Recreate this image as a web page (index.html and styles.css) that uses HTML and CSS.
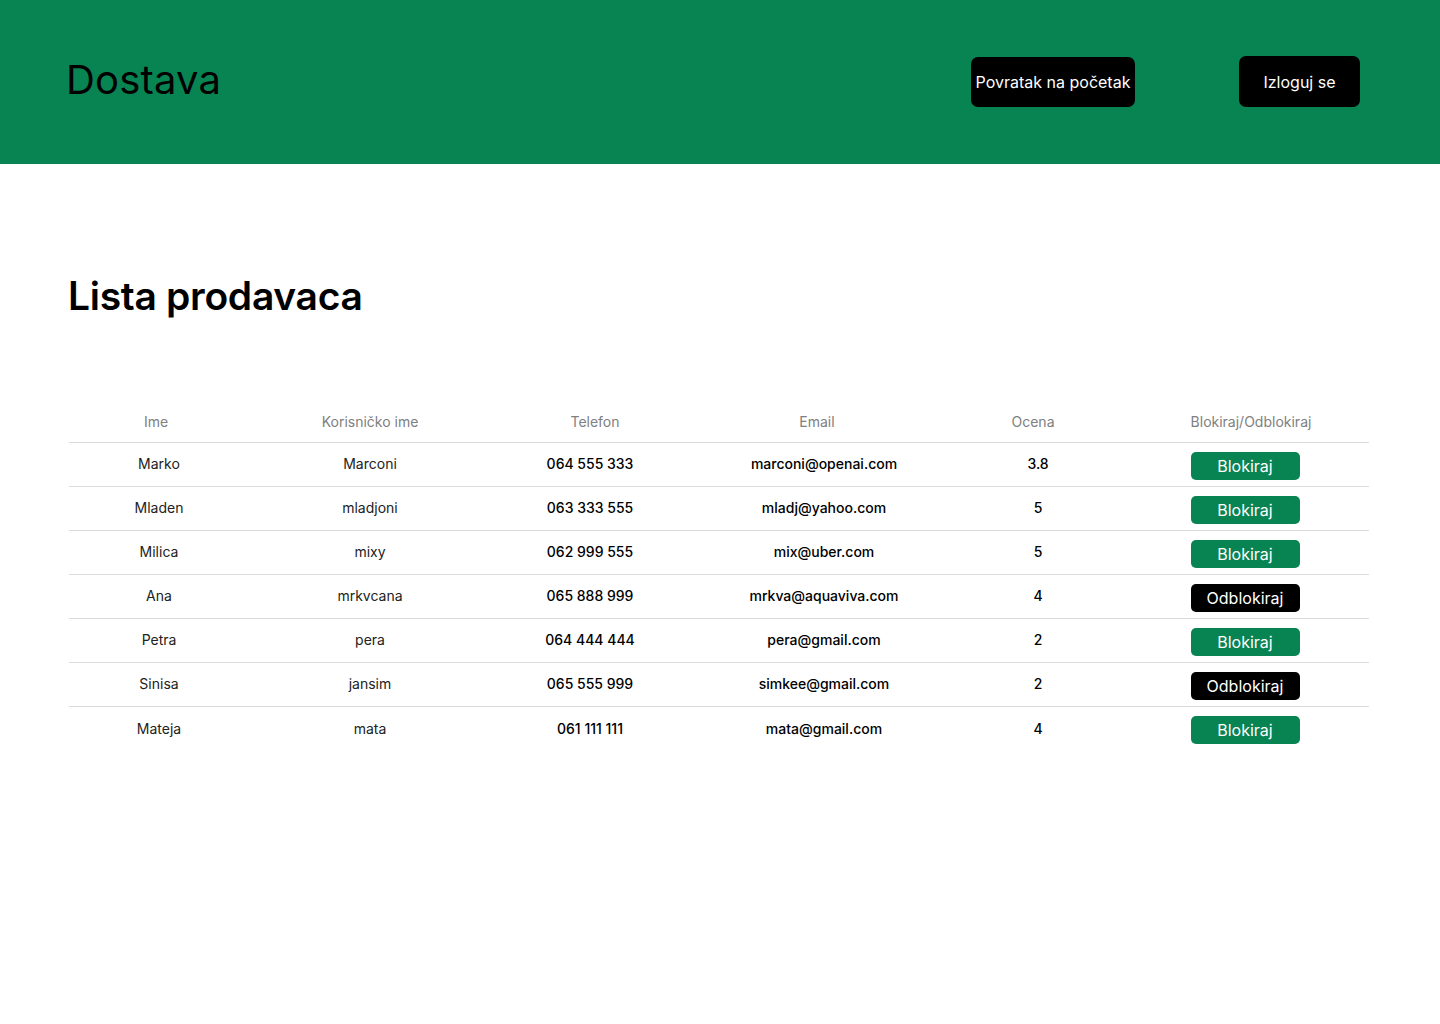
FILE: index.html
```html
<!DOCTYPE html>
<html lang="sr">
<head>
<meta charset="utf-8">
<title>Dostava</title>
<link rel="stylesheet" href="styles.css">
</head>
<body>
<header class="topbar">
  <div class="brand">Dostava</div>
  <nav class="nav">
    <button class="nav-btn btn-home">Povratak na početak</button>
    <button class="nav-btn btn-logout">Izloguj se</button>
  </nav>
</header>
<main class="content">
  <h1 class="title">Lista prodavaca</h1>
  <div class="table">
    <div class="row head">
      <div class="cell">Ime</div>
      <div class="cell">Korisničko ime</div>
      <div class="cell">Telefon</div>
      <div class="cell">Email</div>
      <div class="cell">Ocena</div>
      <div class="cell">Blokiraj/Odblokiraj</div>
    </div>
    <div class="row">
      <div class="cell name">Marko</div>
      <div class="cell name">Marconi</div>
      <div class="cell strong">064 555 333</div>
      <div class="cell strong">marconi@openai.com</div>
      <div class="cell strong">3.8</div>
      <div class="cell"><button class="act block">Blokiraj</button></div>
    </div>
    <div class="row">
      <div class="cell name">Mladen</div>
      <div class="cell name">mladjoni</div>
      <div class="cell strong">063 333 555</div>
      <div class="cell strong">mladj@yahoo.com</div>
      <div class="cell strong">5</div>
      <div class="cell"><button class="act block">Blokiraj</button></div>
    </div>
    <div class="row">
      <div class="cell name">Milica</div>
      <div class="cell name">mixy</div>
      <div class="cell strong">062 999 555</div>
      <div class="cell strong">mix@uber.com</div>
      <div class="cell strong">5</div>
      <div class="cell"><button class="act block">Blokiraj</button></div>
    </div>
    <div class="row">
      <div class="cell name">Ana</div>
      <div class="cell name">mrkvcana</div>
      <div class="cell strong">065 888 999</div>
      <div class="cell strong">mrkva@aquaviva.com</div>
      <div class="cell strong">4</div>
      <div class="cell"><button class="act unblock">Odblokiraj</button></div>
    </div>
    <div class="row">
      <div class="cell name">Petra</div>
      <div class="cell name">pera</div>
      <div class="cell strong">064 444 444</div>
      <div class="cell strong">pera@gmail.com</div>
      <div class="cell strong">2</div>
      <div class="cell"><button class="act block">Blokiraj</button></div>
    </div>
    <div class="row">
      <div class="cell name">Sinisa</div>
      <div class="cell name">jansim</div>
      <div class="cell strong">065 555 999</div>
      <div class="cell strong">simkee@gmail.com</div>
      <div class="cell strong">2</div>
      <div class="cell"><button class="act unblock">Odblokiraj</button></div>
    </div>
    <div class="row last">
      <div class="cell name">Mateja</div>
      <div class="cell name">mata</div>
      <div class="cell strong">061 111 111</div>
      <div class="cell strong">mata@gmail.com</div>
      <div class="cell strong">4</div>
      <div class="cell"><button class="act block">Blokiraj</button></div>
    </div>
  </div>
</main>
</body>
</html>
```
FILE: styles.css
```css
* { box-sizing: border-box; }
html, body { margin: 0; padding: 0; background: #fff; }
body { font-family: Inter, "Noto Sans", sans-serif; color: #000; }

.topbar {
  height: 164px;
  background: #088453;
  display: flex;
  align-items: center;
  padding: 0 80px 0 66px;
}
.brand {
  font-size: 40px;
  font-weight: 400;
  color: #000;
  margin-top: -6px;
  letter-spacing: 0.2px;
}
.nav { margin-left: auto; display: flex; align-items: center; gap: 104px; }
.nav-btn {
  font-family: Inter, sans-serif;
  background: #000;
  color: #fff;
  border: none;
  border-radius: 7px;
  height: 51px;
  font-size: 16px;
  padding: 0;
}
.btn-home { width: 164px; height: 50px; margin-top: 0; }
.btn-logout { width: 121px; margin-top: -1px; }

.content { padding: 108px 71px 0 69px; }
.title {
  margin: 0 0 0 -1px;
  font-size: 39px;
  font-weight: 600;
  line-height: 48px;
  letter-spacing: -0.3px;
}
.table { margin-top: 84px; width: 1300px; }
.row {
  display: grid;
  grid-template-columns: 180px 242px 198px 270px 158px 252px;
  height: 44px;
  align-items: center;
  border-bottom: 1px solid #dcdcdc;
}
.row.head { height: 39px; }
.row.last { border-bottom: none; }
.cell { text-align: center; font-size: 14px; }
.head .cell { color: #808080; font-size: 14px; padding-bottom: 4px; }
.head .cell:nth-child(1) { padding-right: 6px; }
.head .cell:nth-child(3) { padding-left: 10px; }
.head .cell:nth-child(4) { padding-right: 14px; }
.head .cell:nth-child(5) { padding-right: 10px; }
.head .cell:nth-child(6) { padding-left: 16px; }
.name { color: #222; }
.strong { font-weight: 500; color: #000; }
.row:not(.head) .cell { padding-bottom: 2px; }
.row:not(.head) .cell:nth-child(6) { padding-left: 4px; padding-bottom: 0; }
.act {
  font-family: Inter, sans-serif;
  width: 109px;
  height: 28px;
  border: none;
  border-radius: 5px;
  color: #fff;
  font-size: 16px;
  padding: 0;
  margin-top: 2px;
}
.block { background: #088453; }
.unblock { background: #000; }
```
